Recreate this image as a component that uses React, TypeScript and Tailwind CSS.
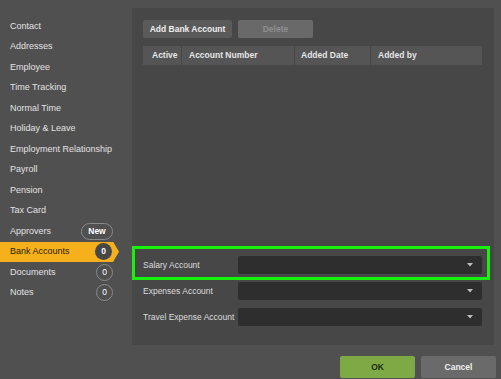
import React from 'react';

const items = [
  { label: 'Contact' },
  { label: 'Addresses' },
  { label: 'Employee' },
  { label: 'Time Tracking' },
  { label: 'Normal Time' },
  { label: 'Holiday & Leave' },
  { label: 'Employment Relationship' },
  { label: 'Payroll' },
  { label: 'Pension' },
  { label: 'Tax Card' },
  { label: 'Approvers', badge: 'New' },
  { label: 'Bank Accounts', badge: '0', active: true },
  { label: 'Documents', badge: '0' },
  { label: 'Notes', badge: '0' },
];

function Caret() {
  return (
    <svg width="6" height="4" viewBox="0 0 6 4" className="text-[#bdbdbd]">
      <path d="M0 0h6L3 3.5z" fill="currentColor" />
    </svg>
  );
}

function Select({ label }: { label: string }) {
  return (
    <div className="flex items-center h-[18px]">
      <span className="w-[95px] whitespace-nowrap text-[8.5px] text-[#dcdcdc]">{label}</span>
      <div className="w-[244px] h-[18px] bg-[#2e2e2e] rounded-[2px] flex items-center justify-end pr-[9px]">
        <Caret />
      </div>
    </div>
  );
}

export default function App() {
  return (
    <div
      className="w-[501px] h-[379px] bg-[#505050] flex overflow-hidden"
      style={{ fontFamily: '"Liberation Sans", Arial, sans-serif' }}
    >
      {/* Sidebar */}
      <div className="w-[132px] pt-[16px] flex flex-col">
        {items.map((it) =>
          it.active ? (
            <div
              key={it.label}
              className="h-[20.5px] w-[119px] bg-[#f6b01c] flex items-center pl-[10px] [clip-path:polygon(0_0,113px_0,119px_50%,113px_100%,0_100%)]"
            >
              <span className="flex-1 whitespace-nowrap text-[9px] font-medium text-[#2a2000]">{it.label}</span>
              <span className="mr-[7px] w-[17px] h-[17px] rounded-full bg-[#474747] text-white text-[8.5px] font-bold flex items-center justify-center">
                {it.badge}
              </span>
            </div>
          ) : (
            <div key={it.label} className="h-[20.5px] w-[113px] flex items-center pl-[10px]">
              <span className="flex-1 whitespace-nowrap text-[9px] text-[#e2e2e2]">{it.label}</span>
              {it.badge === 'New' && (
                <span className="w-[32px] h-[17px] rounded-full border border-[#8a8a8a] text-white text-[8.5px] font-bold flex items-center justify-center">
                  New
                </span>
              )}
              {it.badge === '0' && (
                <span className="w-[17px] h-[17px] rounded-full border border-[#8a8a8a] text-white text-[8.5px] flex items-center justify-center">
                  0
                </span>
              )}
            </div>
          )
        )}
      </div>

      {/* Main */}
      <div className="flex flex-col">
        <div className="relative mt-[8px] w-[362px] h-[337px] bg-[#474747] pl-[11px] pt-[12px] flex flex-col">
          <div className="flex gap-[6px]">
            <button className="w-[89px] h-[18px] bg-[#5a5a5a] rounded-[2px] text-[8.5px] font-bold text-[#eeeeee]">
              Add Bank Account
            </button>
            <button className="w-[75px] h-[18px] bg-[#696969] rounded-[2px] text-[8.5px] font-bold text-[#8f8f8f]">
              Delete
            </button>
          </div>

          <div className="mt-[8px] w-[339px] h-[19px] flex text-[8.5px] font-bold text-[#e6e6e6] gap-px">
            <div className="w-[38px] bg-[#555555] flex items-center pl-[9px]">Active</div>
            <div className="w-[112px] bg-[#555555] flex items-center pl-[7px]">Account Number</div>
            <div className="w-[75px] bg-[#555555] flex items-center pl-[6px]">Added Date</div>
            <div className="flex-1 bg-[#555555] flex items-center pl-[7px]">Added by</div>
          </div>

          <div className="flex-1" />

          <div className="flex flex-col gap-[8px] mb-[19px]">
            <Select label="Salary Account" />
            <Select label="Expenses Account" />
            <Select label="Travel Expense Account" />
          </div>

          {/* highlight overlay */}
          <div className="absolute left-0 top-[238px] w-[358px] h-[34px] border-[3px] border-[#16f20a] pointer-events-none" />
        </div>

        <div className="flex justify-end gap-[6px] mt-[11px] w-[364px]">
          <button className="w-[75px] h-[22px] bg-[#7daa45] rounded-[2px] text-[8.5px] font-bold text-[#1f2a10]">OK</button>
          <button className="w-[75px] h-[22px] bg-[#6a6a6a] rounded-[2px] text-[8.5px] font-bold text-[#eeeeee]">Cancel</button>
        </div>
      </div>
    </div>
  );
}
